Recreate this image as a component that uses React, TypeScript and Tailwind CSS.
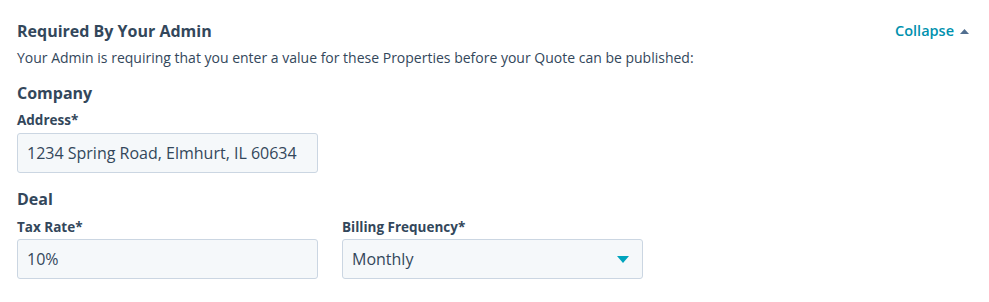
import React from "react";

function Field({ label, value, select, tight }: { label: string; value: string; select?: boolean; tight?: boolean }) {
  return (
    <div className="flex flex-col w-[301px]">
      <div className="text-[13.5px] font-bold leading-[20px] text-[#33475b]">{label}</div>
      <div className={`${tight ? "mt-[2px]" : "mt-[3px]"} h-[40px] rounded-[3px] border border-[#cbd6e2] bg-[#f5f8fa] flex items-center pl-[9px] pr-[13px] justify-between`}>
        <span className="text-[16px] text-[#33475b]">{value}</span>
        {select && (
          <svg width="12" height="7" viewBox="0 0 12 7">
            <path d="M0 0 L12 0 L6 7 Z" fill="#00a4bd" />
          </svg>
        )}
      </div>
    </div>
  );
}

export default function App() {
  return (
    <div className="w-[989px] h-[302px] bg-white px-[17px] pt-[20px]" style={{ fontFamily: "'Open Sans', 'Noto Sans', sans-serif" }}>
      <div className="flex items-center justify-between">
        <div className="text-[16px] font-bold leading-[22px] text-[#33475b]">Required By Your Admin</div>
        <div className="flex items-center gap-[6px] pr-[3px]">
          <span className="text-[14.5px] font-semibold text-[#0091ae]">Collapse</span>
          <svg width="9" height="5" viewBox="0 0 9 5">
            <path d="M0 5 L4.5 0 L9 5 Z" fill="#516f90" />
          </svg>
        </div>
      </div>
      <div className="mt-[6px] text-[14px] leading-[20px] text-[#33475b]">
        Your Admin is requiring that you enter a value for these Properties before your Quote can be published:
      </div>
      <div className="mt-[14px] text-[16px] font-bold leading-[22px] text-[#33475b]">Company</div>
      <div className="mt-[6px]">
        <Field label="Address*" value="1234 Spring Road, Elmhurt, IL 60634" />
      </div>
      <div className="mt-[15px] text-[16px] font-bold leading-[22px] text-[#33475b]">Deal</div>
      <div className="mt-[7px] flex gap-[24px]">
        <Field label="Tax Rate*" value="10%" tight />
        <Field label="Billing Frequency*" value="Monthly" select tight />
      </div>
    </div>
  );
}
